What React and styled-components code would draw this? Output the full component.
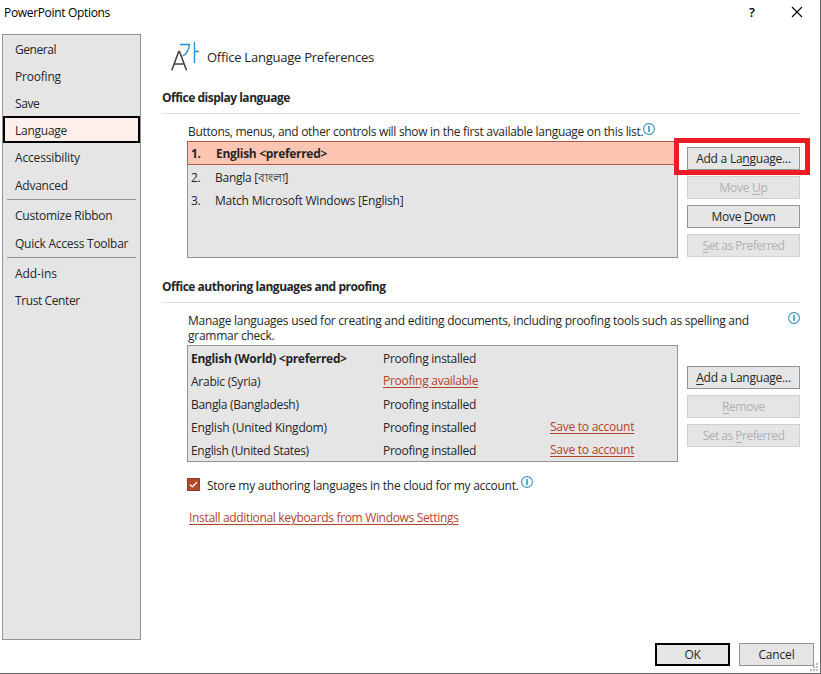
import React from "react";
import styled, { createGlobalStyle, css } from "styled-components";

const GlobalStyle = createGlobalStyle`
    * { box-sizing: border-box; }
    body {
        margin: 0;
        background: #fff;
        color: #262626;
        font-family: "Open Sans", "Noto Sans", sans-serif;
        font-size: 12px;
        line-height: 15px;
        overflow: hidden;
    }
`;

const Dialog = styled("div")`
    display: flex;
    flex-direction: column;
    width: 821px;
    height: 674px;
    background: #fff;
    border-right: 1px solid #666;
    border-bottom: 1px solid #666;
`;

const Text = styled("span")`
    white-space: nowrap;
    letter-spacing: ${({ $ls }) => $ls ?? -0.26}px;
    font-weight: ${({ $bold }) => ($bold ? 700 : 400)};
`;

const TitleBar = styled("header")`
    display: flex;
    align-items: center;
    height: 34px;
    padding: 0 17px 10px 4px;
    color: #000;
`;

const TitleButtons = styled("div")`
    display: flex;
    align-items: center;
    gap: 36px;
    margin-left: auto;
`;

const HelpMark = styled("span")`
    font-size: 13px;
    font-weight: 600;
`;

const Body = styled("div")`
    display: flex;
    height: 606px;
    padding-left: 2px;
`;

const Sidebar = styled("nav")`
    width: 139px;
    height: 606px;
    border: 1px solid #949494;
    background: #e5e5e5;
`;

const NavItem = styled("div")`
    display: flex;
    align-items: center;
    height: 27px;
    padding: 1px 0 0 12px;
    margin-top: ${({ $gap }) => $gap || 0}px;
    ${({ $active }) => $active && css`
        padding-left: 10px;
        border: 2px solid #000;
        background: #fdf0ec;
    `}
`;

const NavDivider = styled("div")`
    height: 1px;
    margin: 1px 4px;
    background: #949494;
`;

const Content = styled("main")`
    width: 659px;
    padding: 7px 0 0 21px;
`;

const PageHeading = styled("h1")`
    display: flex;
    align-items: center;
    gap: 7px;
    height: 32px;
    margin: 0 0 17px;
    padding-left: 8px;
    font-size: 13px;
    font-weight: 400;
`;

const SectionTitle = styled("h2")`
    width: 638px;
    height: 24px;
    margin: 0 0 9px;
    border-bottom: 1px solid #e1e1e1;
    font-size: 12px;
`;

const Section = styled("section")`
    height: ${({ $height }) => $height}px;
`;

const Intro = styled("div")`
    display: flex;
    align-items: flex-start;
    justify-content: ${({ $spread }) => ($spread ? "space-between" : "flex-start")};
    height: ${({ $height }) => $height}px;
    width: 638px;
    padding: 1px 0 0 26px;
`;

const Columns = styled("div")`
    display: flex;
    gap: 9px;
    padding-left: 25px;
`;

const ListBox = styled("div")`
    width: 491px;
    height: 117px;
    border: 1px solid #949494;
    background: #e5e5e5;
`;

const DisplayRow = styled("div")`
    display: grid;
    grid-template-columns: 24px 1fr;
    align-items: center;
    height: 23px;
    padding: 1px 0 0 3px;
    ${({ $selected }) => $selected && css`
        grid-template-columns: 25px 1fr;
        height: 24px;
        margin: -1px -1px 0;
        border: 1px solid #b7573f;
        background: #fec6b2;
    `}
`;

const ProofRow = styled("div")`
    display: grid;
    grid-template-columns: 192px 167px 1fr;
    align-items: center;
    height: 23px;
    padding: 1px 0 0 3px;
`;

const Link = styled("a")`
    color: #b3432d;
    text-decoration: underline;
    text-underline-offset: 2px;
    white-space: nowrap;
    letter-spacing: ${({ $ls }) => $ls ?? -0.26}px;
    margin-bottom: ${({ $raise }) => ($raise ? 2 : 0)}px;
`;

const ButtonStack = styled("div")`
    display: flex;
    flex-direction: column;
    gap: 6px;
    padding-top: ${({ $top }) => $top}px;
`;

const Button = styled("button")`
    display: flex;
    align-items: center;
    justify-content: center;
    width: ${({ $width }) => $width || 113}px;
    height: 23px;
    padding: 0;
    border: 1px solid #949494;
    background: #e5e5e5;
    color: #262626;
    font: inherit;
    u { text-underline-offset: 2px; }
    &:disabled {
        border-color: #cfcfcf;
        color: #b0b0b0;
    }
    ${({ $primary }) => $primary && css`
        border: 2px solid #000;
    `}
`;

const Highlighted = styled("div")`
    position: relative;
    &::after {
        content: "";
        position: absolute;
        inset: -9px -10px -5px -13px;
        border: 5px solid #ec1c24;
    }
`;

const CheckRow = styled("label")`
    display: flex;
    align-items: flex-start;
    height: 33px;
    padding: 16px 0 0 25px;
`;

const CheckBox = styled("span")`
    display: flex;
    width: 13px;
    height: 13px;
    margin-right: 7px;
    background: #b7472a;
    border: 1px solid #94382a;
`;

const CheckLabel = styled("span")`
    display: flex;
`;

const LinkRow = styled("div")`
    padding: 15px 0 0 27px;
`;

const Footer = styled("footer")`
    display: flex;
    justify-content: flex-end;
    gap: 9px;
    padding: 3px 6px 0 0;
`;

const Grip = styled("svg")`
    position: absolute;
    left: 810px;
    top: 663px;
`;

const InfoSvg = styled("svg")`
    flex: none;
    margin: ${({ $margin }) => $margin};
`;

function InfoIcon({ margin }) {
    return (
        <InfoSvg $margin={margin} width="12" height="12" viewBox="0 0 12 12" fill="none">
            <circle cx="6" cy="6" r="5.4" stroke="#3a8fc0" strokeWidth="1.1" />
            <path d="M6 3v6" stroke="#2b88bd" strokeWidth="1.5" />
        </InfoSvg>
    );
}

function LanguageIcon() {
    return (
        <svg width="30" height="32" viewBox="0 0 30 32" fill="none">
            <path d="M1.800 29.300 8.700 10.500h.8l7 18.800M4.300 23h9.800" stroke="#444" strokeWidth="1.6" />
            <path d="M10 3.500h9.300C19 8.500 17 12.700 12.800 15" stroke="#2a8dd0" strokeWidth="1.400" />
            <path d="M24.500 1v21M24.500 10.500h4.500" stroke="#2a8dd0" strokeWidth="1.400" />
        </svg>
    );
}

// label, letter spacing, extra space above
const navGroups = [
    [["General", -0.45], ["Proofing", -0.2], ["Save", -0.4], ["Language", -0.25], ["Accessibility", -0.16], ["Advanced", -0.25, 1]],
    [["Customize Ribbon", -0.25], ["Quick Access Toolbar", -0.25, 1]],
    [["Add-ins", -0.05], ["Trust Center", -0.4]],
];

const proofing = [
    { name: "English (World) <preferred>", ls: -0.3, bold: true },
    { name: "Arabic (Syria)", ls: -0.24, available: true },
    { name: "Bangla (Bangladesh)", ls: -0.3 },
    { name: "English (United Kingdom)", ls: -0.19, save: true },
    { name: "English (United States)", ls: -0.3, save: true },
];

export default function App() {
    return (
        <Dialog>
            <GlobalStyle />
            <TitleBar>
                <Text $ls={-0.33}>PowerPoint Options</Text>
                <TitleButtons>
                    <HelpMark>?</HelpMark>
                    <svg width="12" height="12" viewBox="0 0 12 12" stroke="#000" strokeWidth="1.1">
                        <path d="M1 1l10 10M11 1L1 11" />
                    </svg>
                </TitleButtons>
            </TitleBar>
            <Body>
                <Sidebar>
                    {navGroups.map((group, i) => (
                        <React.Fragment key={i}>
                            {i > 0 && <NavDivider />}
                            {group.map(([label, ls, gap]) => (
                                <NavItem key={label} $gap={gap} $active={label === "Language"}>
                                    <Text $ls={ls}>{label}</Text>
                                </NavItem>
                            ))}
                        </React.Fragment>
                    ))}
                </Sidebar>
                <Content>
                    <PageHeading>
                        <LanguageIcon />
                        <Text $ls={-0.24}>Office Language Preferences</Text>
                    </PageHeading>
                    <Section $height={189}>
                        <SectionTitle><Text $bold $ls={-0.49}>Office display language</Text></SectionTitle>
                        <Intro $height={18}>
                            <Text $ls={-0.3}>Buttons, menus, and other controls will show in the first available language on this list.</Text>
                            <InfoIcon margin="-1px 0 0" />
                        </Intro>
                        <Columns>
                            <ListBox>
                                <DisplayRow $selected>
                                    <Text $bold>1.</Text>
                                    <Text $bold $ls={-0.31}>English &lt;preferred&gt;</Text>
                                </DisplayRow>
                                <DisplayRow><Text>2.</Text><Text $ls={-0.26}>Bangla [বাংলা]</Text></DisplayRow>
                                <DisplayRow><Text>3.</Text><Text $ls={-0.22}>Match Microsoft Windows [English]</Text></DisplayRow>
                            </ListBox>
                            <ButtonStack $top={6}>
                                <Highlighted><Button><Text $ls={-0.24}>Add a La<u>n</u>guage...</Text></Button></Highlighted>
                                <Button disabled><Text>Move <u>U</u>p</Text></Button>
                                <Button><Text>Move <u>D</u>own</Text></Button>
                                <Button disabled><Text $ls={-0.5}><u>S</u>et as Preferred</Text></Button>
                            </ButtonStack>
                        </Columns>
                    </Section>
                    <Section $height={260}>
                        <SectionTitle><Text $bold $ls={-0.47}>Office authoring languages and proofing</Text></SectionTitle>
                        <Intro $height={33} $spread>
                            <Text>
                                Manage languages used for creating and editing documents, including proofing tools such as spelling and
                                <br />
                                grammar check.
                            </Text>
                            <InfoIcon margin="-1px 0 0" />
                        </Intro>
                        <Columns>
                            <ListBox>
                                {proofing.map((lang) => (
                                    <ProofRow key={lang.name}>
                                        <Text $bold={lang.bold} $ls={lang.ls}>{lang.name}</Text>
                                        {lang.available
                                            ? <Link $raise>Proofing available</Link>
                                            : <Text>Proofing installed</Text>}
                                        {lang.save && <Link $raise>Save to account</Link>}
                                    </ProofRow>
                                ))}
                            </ListBox>
                            <ButtonStack $top={21}>
                                <Button><Text $ls={-0.24}><u>A</u>dd a Language...</Text></Button>
                                <Button disabled><Text $ls={-0.4}><u>R</u>emove</Text></Button>
                                <Button disabled><Text $ls={-0.5}>Set as <u>P</u>referred</Text></Button>
                            </ButtonStack>
                        </Columns>
                        <CheckRow>
                            <CheckBox>
                                <svg width="11" height="11" viewBox="0 0 11 11" fill="none" stroke="#fff" strokeWidth="1.2">
                                    <path d="M2 5.500l2.300 2.300L9 3.200" />
                                </svg>
                            </CheckBox>
                            <CheckLabel>
                                <Text>Store my authoring languages in the cloud for my account.</Text>
                                <InfoIcon margin="-2px 0 0 2px" />
                            </CheckLabel>
                        </CheckRow>
                        <LinkRow><Link $ls={-0.33}>Install additional keyboards from Windows Settings</Link></LinkRow>
                    </Section>
                </Content>
            </Body>
            <Footer>
                <Button $width={75} $primary><Text>OK</Text></Button>
                <Button $width={75}><Text $ls={-0.15}>Cancel</Text></Button>
            </Footer>
            <Grip width="9" height="9" viewBox="0 0 9 9" fill="#bdbdbd">
                <path d="M6 0h2v2h-2zM3 3h2v2h-2zM6 3h2v2h-2zM0 6h2v2h-2zM3 6h2v2h-2zM6 6h2v2h-2z" />
            </Grip>
        </Dialog>
    );
}
